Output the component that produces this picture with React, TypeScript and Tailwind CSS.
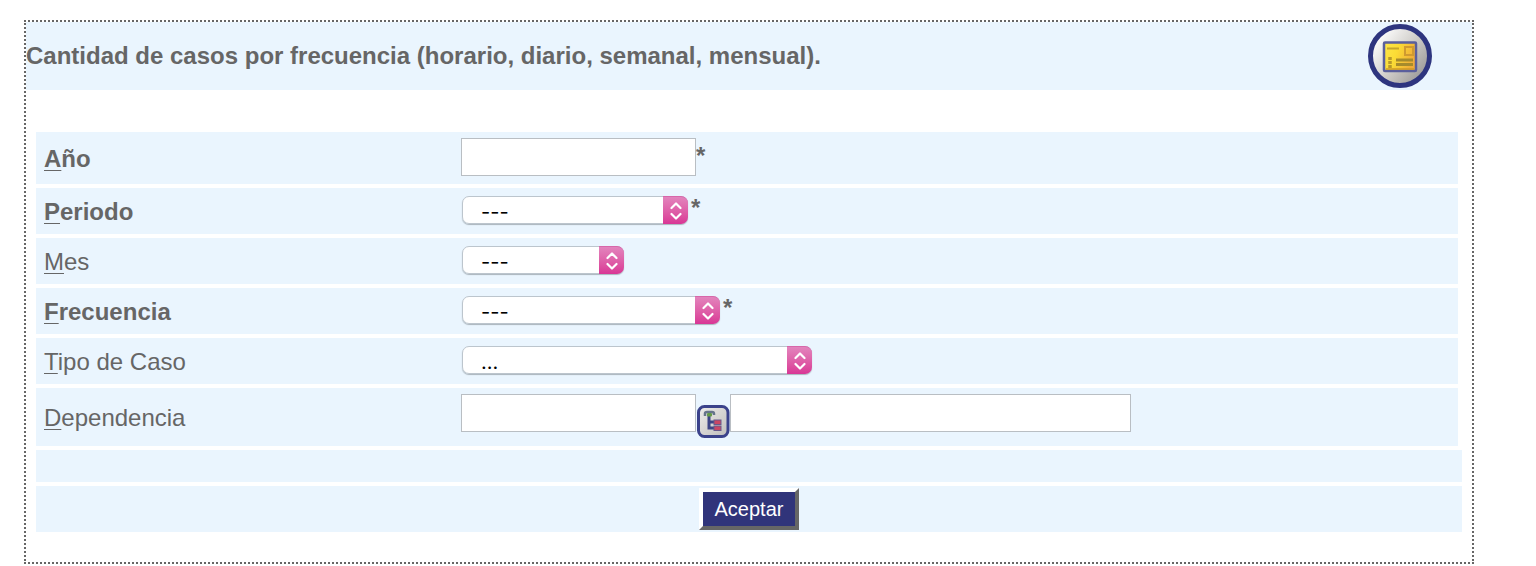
import { useId } from 'react';
import type { ReactNode } from 'react';

function FormIcon() {
  return (
    <svg viewBox="0 0 64 64" className="h-16 w-16" aria-hidden="true">
      <defs>
        <linearGradient id="disc" x1="0" y1="0.1" x2="1" y2="0.9">
          <stop offset="0.1" stopColor="#ffffff" />
          <stop offset="0.5" stopColor="#d2d0cc" />
          <stop offset="1" stopColor="#8f8d8c" />
        </linearGradient>
        <linearGradient id="card" x1="0" y1="0" x2="1" y2="0.3">
          <stop offset="0" stopColor="#fde64a" />
          <stop offset="0.45" stopColor="#fbdc35" />
          <stop offset="1" stopColor="#f0ac38" />
        </linearGradient>
      </defs>
      <circle cx="32" cy="32" r="29.5" fill="url(#disc)" stroke="#2e357f" strokeWidth="5" />
      <rect x="16" y="18.5" width="32" height="28.5" rx="1" fill="url(#card)" stroke="#5a5f9c" strokeWidth="2.5" />
      <path d="M18 45h28" stroke="#cf9a25" strokeWidth="1.5" />
      <path d="M19 24.5h12" stroke="#c5a52a" strokeWidth="2" />
      <rect x="37" y="23" width="8" height="8" fill="none" stroke="#cf9a30" strokeWidth="2" />
      <path d="M28 36h17M28 40.5h17" stroke="#a68b2c" strokeWidth="3" />
      <path d="M22 33v11" stroke="#b8992a" strokeWidth="3.5" strokeDasharray="3 1" />
    </svg>
  );
}

function TreeIcon() {
  return (
    <svg viewBox="0 0 34 34" className="h-[34px] w-[34px]" aria-hidden="true">
      <defs>
        <linearGradient id="tile" x1="0" y1="0" x2="1" y2="1">
          <stop offset="0" stopColor="#eeedeb" />
          <stop offset="1" stopColor="#bfbdbb" />
        </linearGradient>
      </defs>
      <rect x="2.5" y="2.5" width="29.5" height="30" rx="6" fill="url(#tile)" stroke="#3b428b" strokeWidth="3" />
      <path d="M13 11v13h6M13 18h6" fill="none" stroke="#3d4485" strokeWidth="3" />
      <path d="M9 12V9.5Q9 8 11 8h5q2 0 2 2v1" fill="none" stroke="#66748a" strokeWidth="2.5" />
      <rect x="11" y="9" width="5" height="3.5" rx="1" fill="#659a48" />
      <rect x="18" y="16" width="7" height="4.5" fill="#c94765" stroke="#69588b" />
      <rect x="18" y="22" width="7" height="4.5" fill="#c94765" stroke="#69588b" />
    </svg>
  );
}

function Label({ id, text, bold = false }: { id: string; text: string; bold?: boolean }) {
  return (
    <label htmlFor={id} className={bold ? 'font-bold' : ''}>
      <span className="underline decoration-1 underline-offset-3">{text[0]}</span>
      {text.slice(1)}
    </label>
  );
}

function Row({ label, className, children }: { label: ReactNode; className: string; children: ReactNode }) {
  return (
    <div className="mr-1 flex items-stretch bg-[#eaf5fe]">
      <div className="flex w-[425px] shrink-0 items-center pt-px pl-2">{label}</div>
      <div className={`flex min-w-0 flex-1 items-start ${className}`}>{children}</div>
    </div>
  );
}

function Required() {
  return <span className="font-bold leading-6">*</span>;
}

function SelectRow({
  text,
  option,
  width,
  required = false,
}: {
  text: string;
  option: string;
  width: string;
  required?: boolean;
}) {
  const id = useId();
  return (
    <Row label={<Label id={id} text={text} bold={required} />} className="gap-[3px] pt-2 pb-[10px] pl-px">
      <div className={`grid h-7 rounded-[7px] shadow-[0_1px_1px_#aab4bc] ${width}`}>
        <select
          id={id}
          required={required}
          className="col-start-1 row-start-1 h-7 w-full appearance-none rounded-[7px] border border-[#bcc5cd] bg-white pt-[3px] pl-[18px] font-['Inter',sans-serif] text-xl leading-6 text-black"
        >
          <option>{option}</option>
        </select>
        <span className="pointer-events-none col-start-1 row-start-1 flex h-7 w-[25px] items-center justify-center justify-self-end rounded-r-[7px] border-t border-[#d767aa] bg-linear-to-b from-[#e283bd] to-[#d93595]">
          <svg viewBox="0 0 12 18" className="h-[18px] w-3" fill="none" stroke="white" strokeWidth="2.2" strokeLinecap="round" strokeLinejoin="round" aria-hidden="true">
            <path d="M1.5 6 6 1.5 10.5 6M1.5 12 6 16.5 10.5 12" />
          </svg>
        </span>
      </div>
      {required && <Required />}
    </Row>
  );
}

const field = 'h-[38px] border border-[#b9bec3] bg-white px-1';

export default function App() {
  return (
    <main className="pt-5 pr-[62px] pl-6 font-['Liberation_Sans',Arial,sans-serif] text-2xl leading-7 text-[#666]">
      <form className="border-2 border-dotted border-[#666]" onSubmit={(e) => e.preventDefault()}>
        <header className="flex h-[68px] items-center justify-between bg-[#eaf5fe] pr-10">
          <h1 className="font-bold">Cantidad de casos por frecuencia (horario, diario, semanal, mensual).</h1>
          <FormIcon />
        </header>
        <div className="mt-[42px] flex flex-col gap-1 px-[10px] pb-[30px]">
          <Row label={<Label id="anio" text="Año" bold />} className="pt-[6px] pb-2">
            <input id="anio" type="text" required className={`${field} w-[235px]`} />
            <span className="pt-1">
              <Required />
            </span>
          </Row>
          <SelectRow text="Periodo" option="---" width="w-[226px]" required />
          <SelectRow text="Mes" option="---" width="w-[162px]" />
          <SelectRow text="Frecuencia" option="---" width="w-[258px]" required />
          <SelectRow text="Tipo de Caso" option="..." width="w-[350px]" />
          <Row label={<Label id="dependencia" text="Dependencia" />} className="pt-[6px] pb-2">
            <input id="dependencia" type="text" className={`${field} w-[235px]`} />
            <button type="button" aria-label="Buscar dependencia" className="mt-[10px]">
              <TreeIcon />
            </button>
            <input type="text" aria-label="Nombre de la dependencia" className={`${field} w-[401px]`} />
          </Row>
          <div className="h-8 bg-[#eaf5fe]" />
          <div className="flex justify-center bg-[#eaf5fe] pt-[2px] pb-[2px]">
            <button
              type="submit"
              className="h-[42px] border-4 border-t-white border-r-[#666] border-b-[#666] border-l-white bg-[#30347a] px-3 text-xl leading-6 text-white"
            >
              Aceptar
            </button>
          </div>
        </div>
      </form>
    </main>
  );
}
